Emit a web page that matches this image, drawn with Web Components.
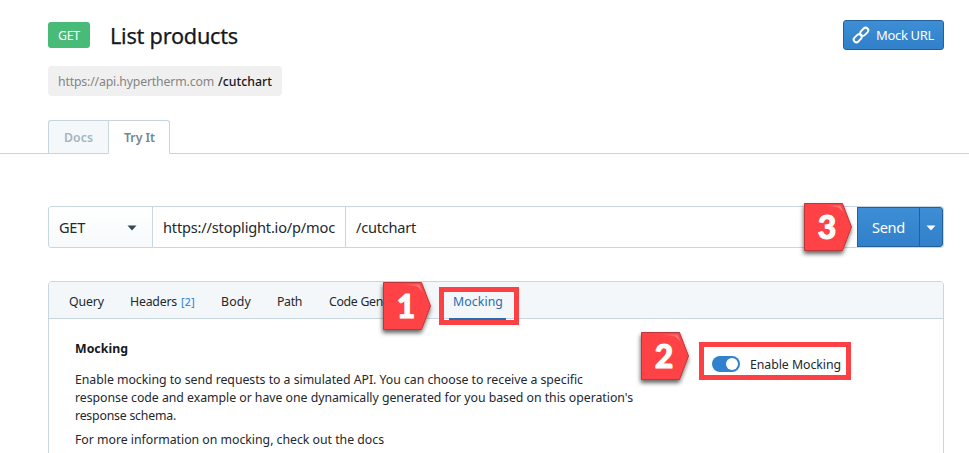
<!DOCTYPE html>
<html lang="en"><head><meta charset="utf-8"><title>List products</title>
<style>
html,body{margin:0;background:#fff;overflow:hidden}
body{width:969px;height:453px;font-family:"Noto Sans","Open Sans",sans-serif;font-size:12.3px;color:#23282e}
</style></head><body>
<api-page></api-page>
<script>
class Base extends HTMLElement{
  connectedCallback(){ if(!this.shadowRoot){this.attachShadow({mode:'open'}).innerHTML=this.render();} }
  get n(){return this.getAttribute('n')||'';}
}
// Text run whose letter spacing is tuned so the line has the requested width.
customElements.define('fit-text',class extends Base{
  render(){return `<style>:host{display:block;white-space:pre;width:max-content;flex:none}</style><slot></slot>`;}
  connectedCallback(){
    super.connectedCallback();
    const w=+this.getAttribute('w'), len=this.textContent.length;
    if(w){this.style.letterSpacing='0px';this.style.letterSpacing=((w-this.getBoundingClientRect().width)/len)+'px';}
  }
});
customElements.define('step-badge',class extends Base{
  render(){return `<style>:host{display:block;width:56px;height:58px}svg{display:block;overflow:visible}
  text{font:900 32px Lato,"Noto Sans",sans-serif;fill:#fff;stroke:#fff;stroke-width:1px}</style>
  <svg width="56" height="58" viewBox="0 0 56 58"><defs><filter id="s" x="-20%" y="-20%" width="150%" height="150%"><feDropShadow dx="-.5" dy="3" stdDeviation="2" flood-color="#000" flood-opacity=".6"/></filter>
  <linearGradient id="g"><stop offset="0" stop-color="#ff9c9d" stop-opacity="0"/><stop offset="1" stop-color="#ff8082"/></linearGradient></defs>
  <path d="M.5.5H38.5L47.5 24L38.5 47.5H.5Z" fill="#ff4245" stroke="#b9383b" filter="url(#s)"/>
  <path d="M20 2.5H36.5L39.5 10Q36 4.5 32 4Z" fill="url(#g)"/>
  <text x="23" y="35.5" text-anchor="middle">${this.n}</text></svg>`;}
});
customElements.define('focus-frame',class extends Base{
  render(){return `<style>:host{display:block;box-sizing:border-box;border:5px solid #fc4043}</style>`;}
});
customElements.define('link-icon',class extends Base{
  render(){return `<style>:host{display:block;width:16px;height:16px}svg{display:block;overflow:visible}</style>
  <svg width="16" height="16" viewBox="0 0 16 16" fill="none" stroke="#fff" stroke-width="1.9" stroke-linecap="round">
  <rect x="-4.5" y="-2.7" width="9" height="5.4" rx="2.7" transform="translate(11.3 4.7) rotate(-45)"/>
  <rect x="-4.5" y="-2.7" width="9" height="5.4" rx="2.7" transform="translate(4.7 11.3) rotate(-45)"/></svg>`;}
});
customElements.define('mock-button',class extends Base{
  render(){return `<style>:host{display:flex;box-sizing:border-box;width:101px;height:30px;border:1px solid #245f99;border-radius:3px;background:linear-gradient(#3d8ed5,#3180ca);color:#fff;align-items:center;padding-left:9px;gap:7px;font-size:13px;line-height:28px}</style><link-icon></link-icon><fit-text w="58">Mock URL</fit-text>`;}
});
customElements.define('page-header',class extends Base{
  render(){return `<style>:host{display:block;padding:20px 25px 0 48px}
  .row{display:flex;height:32px;align-items:center}
  .get{width:42px;height:26px;box-sizing:border-box;padding-left:10px;background:#48bb78;border-radius:3px;color:#fff;font-size:12.3px;line-height:27px;margin-top:-2px}
  .title{font-size:21.7px;line-height:32px;margin-left:20px;color:#15191d;-webkit-text-stroke:.25px #15191d}
  mock-button{margin-left:auto;margin-top:-2px}
  .url{display:flex;box-sizing:border-box;width:234px;height:30px;margin-top:14px;background:#f0f0f0;border-radius:4px;padding-left:10px;line-height:31px;color:#858585;gap:4px}
  b{font-weight:500;color:#17191c;display:block}</style>
  <div class="row"><div class="get"><fit-text w="22">GET</fit-text></div><fit-text class="title" w="128">List products</fit-text><mock-button></mock-button></div>
  <div class="url"><fit-text w="156">https://api.hypertherm.com</fit-text><b><fit-text w="54">/cutchart</fit-text></b></div>`;}
});
customElements.define('page-tabs',class extends Base{
  render(){return `<style>:host{display:flex;box-sizing:border-box;height:34px;margin-top:24px;padding-left:48px;box-shadow:inset 0 -1px #c6d5de;font-weight:600;line-height:33px}
  div{box-sizing:border-box;height:34px;border:1px solid #c6d5de}
  .a{width:61px;border-right:0;border-radius:3px 0 0 0;background:#f4f8fa;color:#a6b5bf;padding-left:15px}
  .b{width:62px;margin-left:-1px;border-bottom-color:#fff;border-radius:0 3px 0 0;background:#fff;color:#718596;padding-left:15px}</style>
  <div class="a"><fit-text w="29">Docs</fit-text></div><div class="b"><fit-text w="31">Try It</fit-text></div>`;}
});
customElements.define('request-bar',class extends Base{
  render(){return `<style>:host{display:flex;box-sizing:border-box;width:896px;height:42px;margin:52px 0 0 48px;border:1px solid #c8d7df;border-radius:3px;font-size:14.6px;line-height:41px}
  div{box-sizing:border-box;height:40px}
  .m{width:104px;border-right:1px solid #c8d7df;padding:0 15px 0 10px;display:flex;align-items:center;justify-content:space-between;background:linear-gradient(#fff,#f7f9fb);border-radius:3px 0 0 3px}
  .h{width:193px;border-right:1px solid #c8d7df;padding-left:10px}
  .p{flex:1;padding-left:10px}
  .s{width:63px;background:linear-gradient(#3d8ed5,#3180ca);border:1px solid #245f99;color:#fff;padding-left:14px;line-height:39px}
  .c{width:25px;margin-left:-1px;background:linear-gradient(#3d8ed5,#3180ca);border:1px solid #245f99;border-radius:0 3px 3px 0;display:flex;align-items:center;justify-content:center}
  .s{margin-right:0}.c{width:24px}
  svg{display:block;margin-top:1px}</style>
  <div class="m"><fit-text w="26">GET</fit-text><svg width="10" height="6"><path d="M.5.5H9.5L5 5.5Z" fill="#33495b"/></svg></div>
  <div class="h"><fit-text w="172">https://stoplight.io/p/moc</fit-text></div>
  <div class="p"><fit-text w="60">/cutchart</fit-text></div>
  <div class="s"><fit-text w="33">Send</fit-text></div><div class="c"><svg width="10" height="6"><path d="M.5.5H9.5L5 5.5Z" fill="#fff"/></svg></div>`;}
});
customElements.define('toggle-switch',class extends Base{
  render(){return `<style>:host{display:flex;box-sizing:border-box;width:28px;height:16px;border-radius:8px;background:#3182ce;padding:2px;justify-content:flex-end}i{display:block;width:12px;height:12px;border-radius:50%;background:#fff}</style><i></i>`;}
});
customElements.define('mock-panel',class extends Base{
  render(){return `<style>:host{display:block;box-sizing:border-box;width:896px;height:190px;margin:33px 0 0 48px;border:1px solid #c8d7df;border-radius:4px 4px 0 0}
  nav{display:flex;box-sizing:border-box;height:37px;padding-left:20px;background:#f3f7f9;border-bottom:1px solid #c8d7df;border-radius:3px 3px 0 0;line-height:40px}
  nav>*{margin-right:26px}
  .h{margin-right:4px}.n{font-size:10.5px;color:#3c8ad5;font-weight:500}
  .active{box-sizing:border-box;width:57px;height:38px;padding-left:4px;border-bottom:2px solid #2b6cb0;color:#2b6cb0;margin:0}
  .body{display:flex;justify-content:space-between;padding:19px 102px 0 26px;line-height:18px}
  h3{margin:2px 0 13px;font-size:12.3px;font-weight:700;line-height:18px;color:#15191d}
  .more{margin-top:6px}
  .sw{display:flex;height:16px;gap:10px;align-items:center;margin-top:18px}
  .sw fit-text{margin-top:2px}</style>
  <nav><fit-text w="35">Query</fit-text><fit-text class="h" w="47">Headers</fit-text><fit-text class="n" w="14">[2]</fit-text><fit-text w="30">Body</fit-text><fit-text style="margin-right:27px" w="25">Path</fit-text><fit-text style="margin-right:66px" w="54">Code Gen</fit-text><div class="active"><fit-text w="50">Mocking</fit-text></div></nav>
  <div class="body"><div><h3><fit-text w="53">Mocking</fit-text></h3>
  <fit-text w="508">Enable mocking to send requests to a simulated API. You can choose to receive a specific</fit-text>
  <fit-text w="558">response code and example or have one dynamically generated for you based on this operation's</fit-text>
  <fit-text w="101">response schema.</fit-text>
  <fit-text class="more" w="309">For more information on mocking, check out the docs</fit-text></div>
  <div class="sw"><toggle-switch></toggle-switch><fit-text w="91">Enable Mocking</fit-text></div></div>`;}
});
customElements.define('api-page',class extends Base{
  render(){return `<style>:host{display:block;position:relative;width:969px;height:453px;overflow:hidden}
  focus-frame,step-badge{position:absolute}</style>
  <page-header></page-header><page-tabs></page-tabs><request-bar></request-bar><mock-panel></mock-panel>
  <focus-frame style="left:439px;top:287px;width:80px;height:38px"></focus-frame>
  <focus-frame style="left:699px;top:342px;width:152px;height:38px"></focus-frame>
  <step-badge n="1" style="left:383px;top:282px"></step-badge>
  <step-badge n="2" style="left:641px;top:332px"></step-badge>
  <step-badge n="3" style="left:804px;top:203px"></step-badge>`;}
});
</script></body></html>
